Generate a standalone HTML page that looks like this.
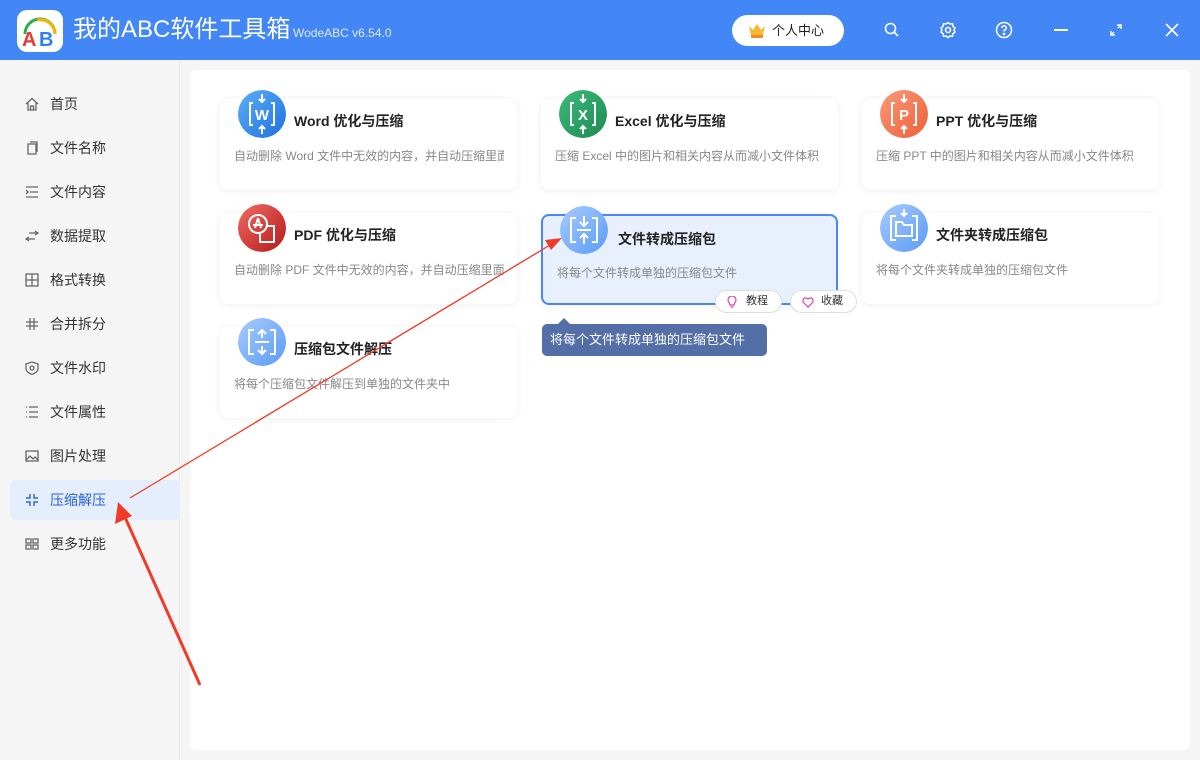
<!DOCTYPE html>
<html><head><meta charset="utf-8">
<style>
*{margin:0;padding:0;box-sizing:border-box}
body{width:1200px;height:760px;overflow:hidden;background:#f5f5f5;font-family:"Liberation Sans","Noto Sans CJK SC",sans-serif;position:relative}
.top{position:absolute;left:0;top:0;width:1200px;height:60px;background:#4287f5}
.logo{position:absolute;left:17px;top:10px;width:46px;height:42px;background:#fff;border-radius:10px}
.title{position:absolute;left:73px;top:14px;color:#fff;font-size:24px;line-height:32px}
.ver{position:absolute;left:293px;top:26px;color:#dfe9ff;font-size:12px}
.user{position:absolute;left:732px;top:15px;width:112px;height:31px;background:#fff;border-radius:16px;font-size:13px;color:#222;line-height:31px;padding-left:40px}
.side{position:absolute;left:0;top:60px;width:180px;height:700px;background:#f5f5f5;border-right:1px solid #ebebeb}
.nav{position:absolute;left:10px;width:170px;height:40px;font-size:14px;color:#333;line-height:40px;padding-left:40px}
.nav.act{background:#e5eefc;color:#2b63d9;border-radius:6px}
.nav svg{position:absolute;left:15px;top:13px}
.main{position:absolute;left:190px;top:70px;width:1000px;height:680px;background:#fff;border-radius:6px}
.card{position:absolute;width:297px;height:91px;background:#fff;border-radius:8px;box-shadow:0 1px 8px rgba(0,0,0,.07)}
.card.sel{background:#e8effd;border:2px solid #4a88f0}
.ic{position:absolute;left:18px;top:-9px;width:48px;height:48px;border-radius:50%}
.ct{position:absolute;left:74px;top:12px;font-size:14px;font-weight:bold;color:#222}
.cd{position:absolute;left:14px;top:48px;font-size:12px;color:#888;white-space:nowrap;overflow:hidden;width:270px}
.pill{position:absolute;height:23px;border:1px solid #ddd;border-radius:12px;background:#fff;font-size:11px;color:#333;line-height:21px;padding-left:30px}
.tip{position:absolute;left:542px;top:324px;width:225px;height:32px;background:#546ea8;border-radius:5px;color:#fff;font-size:13px;line-height:32px;padding-left:8px}
.tip:before{content:"";position:absolute;left:16px;top:-6px;border-left:6px solid transparent;border-right:6px solid transparent;border-bottom:6px solid #546ea8}
</style></head><body>
<div class="top">
 <div class="logo"><svg width="46" height="42" viewBox="0 0 46 42"><path d="M8 24 A15 15 0 0 1 38 24" fill="none" stroke="#2eaa4a" stroke-width="3"/><path d="M20 10 A15 15 0 0 1 38 24" fill="none" stroke="#f5b400" stroke-width="3"/><text x="5" y="36" font-size="20" font-weight="bold" fill="#e53935" font-family="Liberation Sans">A</text><text x="22" y="36" font-size="20" font-weight="bold" fill="#2f80ed" font-family="Liberation Sans">B</text></svg></div>
 <div class="title">我的ABC软件工具箱</div>
 <div class="ver">WodeABC v6.54.0</div>
 <div class="user"><svg style="position:absolute;left:16px;top:8px" width="18" height="15" viewBox="0 0 18 15"><path d="M1 3 L5 7 L9 1 L13 7 L17 3 L15 12 H3Z" fill="#f7b733"/><rect x="3" y="12" width="12" height="3" fill="#f08a24"/></svg>个人中心</div>
 <svg style="position:absolute;left:883px;top:21px" width="18" height="18" viewBox="0 0 18 18" fill="none" stroke="#fff" stroke-width="1.6"><circle cx="7.5" cy="7.5" r="5"/><path d="M11 11 L15 15"/></svg>
 <svg style="position:absolute;left:939px;top:21px" width="18" height="18" viewBox="0 0 18 18" fill="none" stroke="#fff" stroke-width="1.5"><path d="M9 1.5 L11 3 L13.5 2.8 L14 5.3 L16 7 L15 9 L16 11 L14 12.7 L13.5 15.2 L11 15 L9 16.5 L7 15 L4.5 15.2 L4 12.7 L2 11 L3 9 L2 7 L4 5.3 L4.5 2.8 L7 3Z"/><circle cx="9" cy="9" r="2.5"/></svg>
 <svg style="position:absolute;left:995px;top:21px" width="18" height="18" viewBox="0 0 18 18" fill="none" stroke="#fff" stroke-width="1.5"><circle cx="9" cy="9" r="7.5"/><path d="M6.8 7 A2.2 2.2 0 1 1 9 9.2 V10.5"/><circle cx="9" cy="13" r=".6" fill="#fff"/></svg>
 <div style="position:absolute;left:1054px;top:29px;width:14px;height:1.6px;background:#fff"></div>
 <svg style="position:absolute;left:1109px;top:23px" width="14" height="14" viewBox="0 0 14 14" fill="none" stroke="#fff" stroke-width="1.4"><path d="M2 12 L5 9 M9 5 L12 2 M8 2 H12 V6 M2 8 V12 H6"/></svg>
 <svg style="position:absolute;left:1165px;top:23px" width="14" height="14" viewBox="0 0 14 14" stroke="#fff" stroke-width="1.6"><path d="M1 1 L13 13 M13 1 L1 13"/></svg>
</div>
<div class="side">
 <div class="nav" style="top:24px"><svg width="14" height="14" viewBox="0 0 14 14" fill="none" stroke="#666" stroke-width="1.3"><path d="M1 7 L7 1.5 L13 7 M3 6 V13 H11 V6 M5.5 13 V9 H8.5 V13"/></svg>首页</div>
 <div class="nav" style="top:68px"><svg width="14" height="14" viewBox="0 0 14 14" fill="none" stroke="#666" stroke-width="1.3"><path d="M3 3 H11 V13 H3Z M5 1 H12 V11"/></svg>文件名称</div>
 <div class="nav" style="top:112px"><svg width="14" height="14" viewBox="0 0 14 14" fill="none" stroke="#666" stroke-width="1.3"><path d="M1 2 H13 M5 7 H13 M1 12 H13 M1 5 L3 7 L1 9"/></svg>文件内容</div>
 <div class="nav" style="top:156px"><svg width="14" height="14" viewBox="0 0 14 14" fill="none" stroke="#666" stroke-width="1.3"><path d="M4 4 H13 M10 2 L13 4 L10 6 M1 10 H10 M4 8 L1 10 L4 12"/></svg>数据提取</div>
 <div class="nav" style="top:200px"><svg width="14" height="14" viewBox="0 0 14 14" fill="none" stroke="#666" stroke-width="1.3"><rect x="1" y="1" width="12" height="12"/><path d="M7 1 V13 M1 7 H13"/></svg>格式转换</div>
 <div class="nav" style="top:244px"><svg width="14" height="14" viewBox="0 0 14 14" fill="none" stroke="#666" stroke-width="1.3"><path d="M5 1 V13 M9 1 V13 M1 5 H13 M1 9 H13"/></svg>合并拆分</div>
 <div class="nav" style="top:288px"><svg width="14" height="14" viewBox="0 0 14 14" fill="none" stroke="#666" stroke-width="1.3"><path d="M7 1 L13 3 V8 C13 11 7 13.5 7 13.5 C7 13.5 1 11 1 8 V3Z"/><circle cx="7" cy="7" r="2"/></svg>文件水印</div>
 <div class="nav" style="top:332px"><svg width="14" height="14" viewBox="0 0 14 14" fill="none" stroke="#666" stroke-width="1.3"><path d="M1 2 H2 M4 2 H13 M1 7 H2 M4 7 H13 M1 12 H2 M4 12 H13"/></svg>文件属性</div>
 <div class="nav" style="top:376px"><svg width="14" height="14" viewBox="0 0 14 14" fill="none" stroke="#666" stroke-width="1.3"><rect x="1" y="2" width="12" height="10"/><path d="M1 11 L5 7 L8 10 L10 8 L13 11"/></svg>图片处理</div>
 <div class="nav act" style="top:420px"><svg width="14" height="14" viewBox="0 0 14 14" fill="none" stroke="#2b63d9" stroke-width="1.4"><path d="M5 1 V5 H1 M9 1 V5 H13 M5 13 V9 H1 M9 13 V9 H13"/></svg>压缩解压</div>
 <div class="nav" style="top:464px"><svg width="14" height="14" viewBox="0 0 14 14" fill="none" stroke="#666" stroke-width="1.3"><rect x="1" y="2" width="5" height="4"/><rect x="8" y="2" width="5" height="4"/><rect x="1" y="8" width="5" height="4"/><rect x="8" y="8" width="5" height="4"/></svg>更多功能</div>
</div>
<div class="main"></div>

<svg width="0" height="0" style="position:absolute"><defs>
<linearGradient id="gb" x1="0" y1="0" x2="1" y2="1"><stop offset="0" stop-color="#5bb0f8"/><stop offset="1" stop-color="#1f6fe0"/></linearGradient>
<linearGradient id="gg" x1="0" y1="0" x2="1" y2="1"><stop offset="0" stop-color="#3cbb7a"/><stop offset="1" stop-color="#1d8a52"/></linearGradient>
<linearGradient id="go" x1="0" y1="0" x2="1" y2="1"><stop offset="0" stop-color="#fb9a78"/><stop offset="1" stop-color="#ef5e37"/></linearGradient>
<linearGradient id="gr" x1="0" y1="0" x2="1" y2="1"><stop offset="0" stop-color="#f06b63"/><stop offset="1" stop-color="#b51a18"/></linearGradient>
<linearGradient id="gl" x1="0" y1="0" x2="1" y2="1"><stop offset="0" stop-color="#a6cbff"/><stop offset="1" stop-color="#5b9bf5"/></linearGradient>
</defs></svg>

<div class="card" style="left:220px;top:99px"><svg class="ic" viewBox="0 0 48 48"><circle cx="24" cy="24" r="24" fill="url(#gb)"/><g fill="none" stroke="#fff" stroke-width="2"><path d="M15 13 H12 V35 H15 M33 13 H36 V35 H33 M24 4 V12 M21 9 L24 12 L27 9 M24 44 V36 M21 39 L24 36 L27 39"/></g><text x="24" y="30" text-anchor="middle" font-size="15" font-weight="bold" fill="#fff" font-family="Liberation Sans">W</text></svg><div class="ct">Word 优化与压缩</div><div class="cd">自动删除 Word 文件中无效的内容，并自动压缩里面的图片</div></div>
<div class="card" style="left:541px;top:99px"><svg class="ic" viewBox="0 0 48 48"><circle cx="24" cy="24" r="24" fill="url(#gg)"/><g fill="none" stroke="#fff" stroke-width="2"><path d="M15 13 H12 V35 H15 M33 13 H36 V35 H33 M24 4 V12 M21 9 L24 12 L27 9 M24 44 V36 M21 39 L24 36 L27 39"/></g><text x="24" y="30" text-anchor="middle" font-size="15" font-weight="bold" fill="#fff" font-family="Liberation Sans">X</text></svg><div class="ct">Excel 优化与压缩</div><div class="cd">压缩 Excel 中的图片和相关内容从而减小文件体积</div></div>
<div class="card" style="left:862px;top:99px"><svg class="ic" viewBox="0 0 48 48"><circle cx="24" cy="24" r="24" fill="url(#go)"/><g fill="none" stroke="#fff" stroke-width="2"><path d="M15 13 H12 V35 H15 M33 13 H36 V35 H33 M24 4 V12 M21 9 L24 12 L27 9 M24 44 V36 M21 39 L24 36 L27 39"/></g><text x="24" y="30" text-anchor="middle" font-size="15" font-weight="bold" fill="#fff" font-family="Liberation Sans">P</text></svg><div class="ct">PPT 优化与压缩</div><div class="cd">压缩 PPT 中的图片和相关内容从而减小文件体积</div></div>

<div class="card" style="left:220px;top:213px"><svg class="ic" viewBox="0 0 48 48"><circle cx="24" cy="24" r="24" fill="url(#gr)"/><g fill="none" stroke="#fff" stroke-width="2"><circle cx="20" cy="20" r="9"/><path d="M20 14 L17 24 M20 14 L23 24 M15 21 H25 M29 22 H36 V38 H22 V30"/></g></svg><div class="ct">PDF 优化与压缩</div><div class="cd">自动删除 PDF 文件中无效的内容，并自动压缩里面的图片</div></div>
<div class="card sel" style="left:541px;top:214px"><svg class="ic" style="left:17px;top:-10px" viewBox="0 0 48 48"><circle cx="24" cy="24" r="24" fill="url(#gl)"/><g fill="none" stroke="#fff" stroke-width="2"><path d="M16 12 H11 V36 H16 M32 12 H37 V36 H32 M24 10 V20 M20 16 L24 20 L28 16 M24 38 V28 M20 32 L24 28 L28 32 M17 24 H31"/></g></svg><div class="ct" style="left:75px;top:13px">文件转成压缩包</div><div class="cd">将每个文件转成单独的压缩包文件</div></div>
<div class="card" style="left:862px;top:213px"><svg class="ic" viewBox="0 0 48 48"><circle cx="24" cy="24" r="24" fill="url(#gl)"/><g fill="none" stroke="#fff" stroke-width="2"><path d="M16 12 H11 V36 H16 M32 12 H37 V36 H32 M24 5 V12 M21 9 L24 12 L27 9 M16 18 H22 L24 21 H32 V32 H16Z"/></g></svg><div class="ct">文件夹转成压缩包</div><div class="cd">将每个文件夹转成单独的压缩包文件</div></div>

<div class="card" style="left:220px;top:327px"><svg class="ic" viewBox="0 0 48 48"><circle cx="24" cy="24" r="24" fill="url(#gl)"/><g fill="none" stroke="#fff" stroke-width="2"><path d="M16 12 H11 V36 H16 M32 12 H37 V36 H32 M24 12 V20 M20 16 L24 12 L28 16 M24 36 V28 M20 32 L24 36 L28 32 M17 24 H31"/></g></svg><div class="ct">压缩包文件解压</div><div class="cd">将每个压缩包文件解压到单独的文件夹中</div></div>

<div class="pill" style="left:715px;top:290px;width:67px"><svg style="position:absolute;left:11px;top:5px" width="10" height="12" viewBox="0 0 10 12" fill="none" stroke="#e0459a" stroke-width="1.2"><path d="M3 9 C3 7 1 6 1 4 A4 4 0 0 1 9 4 C9 6 7 7 7 9Z M3.5 11 H6.5"/></svg>教程</div>
<div class="pill" style="left:790px;top:290px;width:67px"><svg style="position:absolute;left:11px;top:6px" width="12" height="11" viewBox="0 0 12 11" fill="none" stroke="#e0459a" stroke-width="1.2"><path d="M6 10 L1.5 5.5 A2.6 2.6 0 0 1 6 2 A2.6 2.6 0 0 1 10.5 5.5Z"/></svg>收藏</div>
<div class="tip">将每个文件转成单独的压缩包文件</div>

<svg style="position:absolute;left:0;top:0" width="1200" height="760">
<line x1="130" y1="498" x2="555" y2="242" stroke="#f03a2a" stroke-width="1.3"/>
<path d="M562 238 L545 240 L551 250Z" fill="#f03a2a"/>
<line x1="200" y1="685" x2="124" y2="515" stroke="#f03a2a" stroke-width="3"/>
<path d="M118 502 L115 524 L132 516Z" fill="#f03a2a"/>
</svg>
</body></html>
